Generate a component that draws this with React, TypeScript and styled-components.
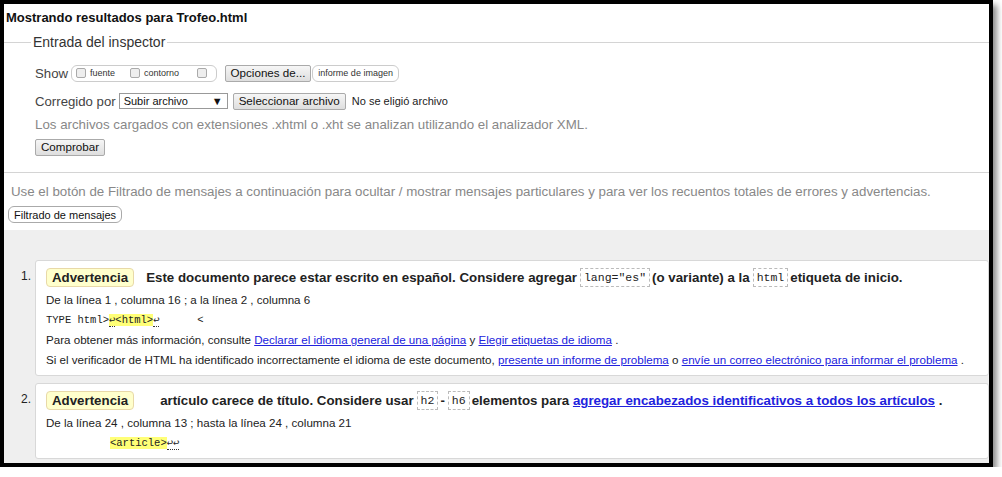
import React from "react";
import styled, { createGlobalStyle } from "styled-components";

const Global = createGlobalStyle`
  html, body {
    margin: 0;
    padding: 0;
    background: #ffffff;
  }
  body {
    font-family: "Liberation Sans", Arial, sans-serif;
    color: #222;
  }
`;

const Frame = styled.div`
  width: 985px;
  height: 459px;
  border: 4px solid #000;
  box-shadow: 4px 5px 6px rgba(0, 0, 0, 0.45);
  overflow: hidden;
  background: #fff;
  display: flex;
  flex-direction: column;
`;

const Title = styled.h1`
  margin: 6px 0 0 2px;
  font-size: 13px;
  font-weight: bold;
  color: #111;
  line-height: 16px;
`;

const Fieldset = styled.fieldset`
  margin: 8px 0 0 0;
  padding: 8px 0 0 0;
  border: none;
  border-top: 1px solid #d4d4d4;
`;

const Legend = styled.legend`
  margin-left: 27px;
  padding: 0 2px;
  font-size: 14px;
  color: #333;
`;

const Inner = styled.div`
  padding-left: 31px;
  display: flex;
  flex-direction: column;
`;

const FormRow = styled.div<{ $mb?: number; $mt?: number }>`
  display: flex;
  align-items: center;
  gap: 3px;
  height: 18px;
  margin-top: ${(p) => p.$mt ?? 0}px;
  margin-bottom: ${(p) => p.$mb ?? 10}px;
  font-size: 13.2px;
  color: #444;
`;

const Pill = styled.span`
  display: inline-flex;
  align-items: center;
  height: 15px;
  padding: 0 5px 0 4px;
  border: 1px solid #ccc;
  border-radius: 6px;
  font-size: 9px;
  color: #333;
  white-space: pre;
`;

const Check = styled.span`
  display: inline-block;
  width: 8px;
  height: 8px;
  border: 1px solid #aaa;
  border-radius: 2px;
  background: #eee;
  margin-right: 4px;
`;

const Button = styled.button<{ $size?: number; $round?: boolean }>`
  font-family: "Liberation Sans", Arial, sans-serif;
  font-size: ${(p) => p.$size ?? 11.6}px;
  color: #111;
  height: 17px;
  padding: 0 5px;
  border: 1px solid #aaa;
  border-radius: ${(p) => (p.$round ? "6px" : "2px")};
  background: ${(p) => (p.$round ? "#fff" : "linear-gradient(#f6f6f6, #dedede)")};
  line-height: 14px;
  cursor: pointer;
`;

const Select = styled.span`
  display: inline-flex;
  justify-content: space-between;
  align-items: center;
  width: 99px;
  height: 14px;
  padding: 0 4px;
  border: 1px solid #999;
  font-size: 11px;
  color: #111;
  margin-right: 2px;
`;

const Small = styled.span`
  font-size: 11px;
  color: #222;
  margin-left: 3px;
`;

const Note = styled.p`
  margin: -3px 0 5px 0;
  font-size: 13.3px;
  color: #888;
`;

const Rule = styled.hr`
  margin: 16px 0 0 0;
  border: none;
  border-top: 1px solid #d4d4d4;
`;

const Intro = styled.p`
  margin: 11px 0 6px 7px;
  font-size: 13.32px;
  color: #888;
`;

const FilterWrap = styled.div`
  padding-left: 4px;
`;

const Results = styled.ol`
  margin: 7px 0 0 0;
  padding: 30px 0 0 0;
  list-style: none;
  background: #efefef;
  flex: 1;
  display: flex;
  flex-direction: column;
  gap: 7px;
`;

const Item = styled.li`
  display: flex;
  align-items: flex-start;
`;

const Num = styled.span`
  width: 27px;
  padding-top: 9px;
  padding-right: 4px;
  text-align: right;
  font-size: 12px;
  color: #222;
`;

const Card = styled.div`
  flex: 1;
  background: #fff;
  border: 1px solid #d8d8d8;
  border-radius: 3px;
  padding: 7px 10px 5px 10px;
  font-size: 11.6px;
  color: #222;
  white-space: nowrap;
`;

const Head = styled.div`
  display: flex;
  align-items: center;
  height: 19px;
  font-size: 13.3px;
  font-weight: bold;
  color: #222;
  margin-bottom: 3px;
`;

const Badge = styled.span<{ $gap: number }>`
  display: inline-block;
  padding: 0 5px;
  height: 17px;
  line-height: 17px;
  background: #ffffcc;
  border: 1px solid #e8d9a8;
  border-radius: 4px;
  font-weight: bold;
  margin-right: ${(p) => p.$gap}px;
`;

const Code = styled.code`
  font-family: "Liberation Mono", "DejaVu Sans Mono", monospace;
  font-weight: normal;
  font-size: 11.5px;
  padding: 0 3px;
  height: 17px;
  line-height: 17px;
  border: 1px dashed #bbb;
  margin: 0 2px 0 3px;
`;

const Line = styled.div`
  height: 20px;
  line-height: 20px;
`;

const Source = styled.pre<{ $indent?: number }>`
  margin: 0;
  height: 20px;
  line-height: 20px;
  font-family: "Liberation Mono", "DejaVu Sans Mono", monospace;
  font-size: 10.5px;
  color: #222;
  padding-left: ${(p) => p.$indent ?? 0}px;
`;

const Mark = styled.mark`
  background: #ffff77;
  color: #222;
`;

const Ret = styled.span`
  border-bottom: 1px dotted #333;
`;

const Link = styled.a`
  color: #2222dd;
  text-decoration: underline;
`;

export default function App() {
  return (
    <>
      <Global />
      <Frame>
        <Title>Mostrando resultados para Trofeo.html</Title>
        <Fieldset>
          <Legend>Entrada del inspector</Legend>
          <Inner>
            <FormRow $mt={6}>
              Show
              <Pill>
                <Check />fuente{"      "}<Check />contorno{"       "}<Check />
              </Pill>
              <Button style={{ marginLeft: 5 }}>Opciones de...</Button>
              <Pill style={{ marginLeft: -2, padding: "0 5px" }}>informe de imagen</Pill>
            </FormRow>
            <FormRow>
              Corregido por
              <Select>
                Subir archivo <span>▼</span>
              </Select>
              <Button>Seleccionar archivo</Button>
              <Small>No se eligió archivo</Small>
            </FormRow>
            <Note>
              Los archivos cargados con extensiones .xhtml o .xht se analizan utilizando el analizador XML.
            </Note>
            <div>
              <Button>Comprobar</Button>
            </div>
          </Inner>
        </Fieldset>
        <Rule />
        <Intro>
          Use el botón de Filtrado de mensajes a continuación para ocultar / mostrar mensajes particulares
          y para ver los recuentos totales de errores y advertencias.
        </Intro>
        <FilterWrap>
          <Button $round $size={11}>
            Filtrado de mensajes
          </Button>
        </FilterWrap>
        <Results>
          <Item>
            <Num>1.</Num>
            <Card>
              <Head>
                <Badge $gap={12}>Advertencia</Badge>
                Este documento parece estar escrito en español. Considere agregar
                <Code>lang="es"</Code>(o variante) a la<Code>html</Code>etiqueta de inicio.
              </Head>
              <Line>De la línea 1 , columna 16 ; a la línea 2 , columna 6</Line>
              <Source>
                TYPE html&gt;<Mark><Ret>↩</Ret>&lt;html&gt;</Mark>
                <Ret>↩</Ret>      &lt;
              </Source>
              <Line>
                Para obtener más información, consulte{" "}
                <Link href="#">Declarar el idioma general de una página</Link> y{" "}
                <Link href="#">Elegir etiquetas de idioma</Link> .
              </Line>
              <Line>
                Si el verificador de HTML ha identificado incorrectamente el idioma de este documento,{" "}
                <Link href="#">presente un informe de problema</Link> o{" "}
                <Link href="#">envíe un correo electrónico para informar el problema</Link> .
              </Line>
            </Card>
          </Item>
          <Item>
            <Num>2.</Num>
            <Card>
              <Head>
                <Badge $gap={26}>Advertencia</Badge>
                artículo carece de título. Considere usar<Code>h2</Code>-<Code>h6</Code>elementos para&nbsp;
                <Link href="#">agregar encabezados identificativos a todos los artículos</Link>&nbsp;.
              </Head>
              <Line>De la línea 24 , columna 13 ; hasta la línea 24 , columna 21</Line>
              <Source $indent={64}>
                <Mark>&lt;article&gt;</Mark>
                <Ret>↩↩</Ret>
              </Source>
            </Card>
          </Item>
        </Results>
      </Frame>
    </>
  );
}
